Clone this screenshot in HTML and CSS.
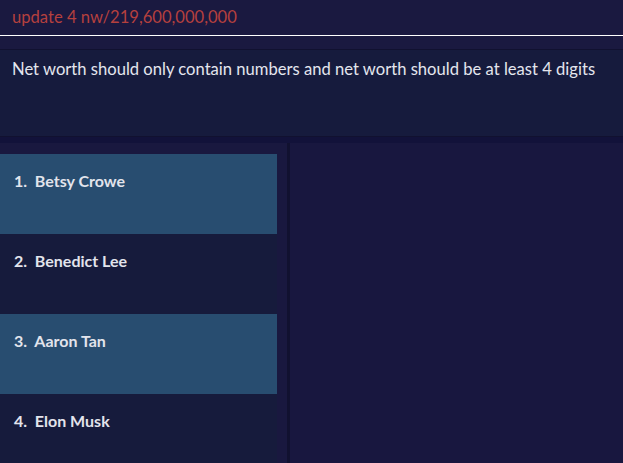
FILE: index.html
```html
<!DOCTYPE html>
<html>
<head>
<meta charset="utf-8">
<link rel="stylesheet" href="styles.css">
</head>
<body>
<div class="app">
  <div class="command">update 4 nw/219,600,000,000</div>
  <div class="result-wrap">
    <div class="result">Net worth should only contain numbers and net worth should be at least 4 digits</div>
  </div>
  <div class="sep"></div>
  <div class="main">
    <div class="list">
      <div class="cell alt">1.&nbsp;&nbsp;Betsy Crowe</div>
      <div class="cell">2.&nbsp;&nbsp;Benedict Lee</div>
      <div class="cell alt">3.&nbsp;&nbsp;Aaron Tan</div>
      <div class="cell">4.&nbsp;&nbsp;Elon Musk</div>
    </div>
    <div class="divider"></div>
    <div class="detail"></div>
  </div>
</div>
</body>
</html>
```
FILE: styles.css
```css
html, body {
  margin: 0;
  padding: 0;
  width: 623px;
  height: 463px;
  overflow: hidden;
  background: #18173f;
}
.app {
  display: flex;
  flex-direction: column;
  height: 463px;
  font-family: Lato, "Open Sans", sans-serif;
}
.command {
  box-sizing: border-box;
  height: 36px;
  padding: 6px 0 0 12px;
  background: #1a1940;
  color: #b5403e;
  font-size: 16.6px;
  line-height: 22px;
  border-bottom: 1px solid #ffffff;
}
.result-wrap {
  background: #1a1940;
  padding-top: 13px;
}
.result {
  height: 78px;
  border-top: 1px solid #111130;
  border-bottom: 1px solid #111130;
  background: #161b3d;
  color: #e4e6ee;
  font-size: 16.6px;
  line-height: 22px;
  padding: 8px 12px 0;
  white-space: nowrap;
}
.sep {
  height: 6px;
  background: #12123a;
}
.main {
  flex: 1;
  display: flex;
  min-height: 0;
}
.list {
  width: 277px;
  padding: 11px 10px 0 0;
  background: #19183f;
  display: flex;
  flex-direction: column;
}
.cell {
  flex: 0 0 80px;
  box-sizing: border-box;
  padding: 17px 0 0 14px;
  background: #161b3c;
  color: #e2e4ec;
  font-size: 16px;
  font-weight: 700;
  line-height: 20px;
}
.cell.alt {
  background: #284d70;
}
.divider {
  width: 3px;
  background: #111130;
}
.detail {
  flex: 1;
  background: #18173f;
}
```
